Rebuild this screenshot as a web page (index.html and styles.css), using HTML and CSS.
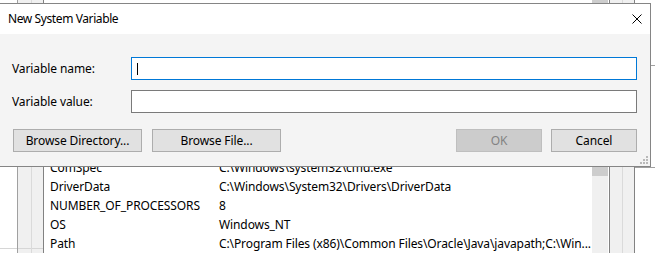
FILE: index.html
```html
<!DOCTYPE html>
<html lang="en">
<head>
    <meta charset="UTF-8">
    <title>New System Variable</title>
    <link rel="stylesheet" href="styles.css">
</head>
<body>
    <div class="backdrop">
        <div class="edge-l"><div class="foot"></div></div>
        <div class="rail rail-a"><div class="foot"></div></div>
        <div class="rail rail-b"><div class="foot"></div></div>
        <div class="list">
            <div class="list-body">
                <div class="rows">
                    <div class="row"><span>ComSpec</span><span>C:\Windows\system32\cmd.exe</span></div>
                    <div class="row"><span>DriverData</span><span>C:\Windows\System32\Drivers\DriverData</span></div>
                    <div class="row"><span>NUMBER_OF_PROCESSORS</span><span>8</span></div>
                    <div class="row"><span>OS</span><span>Windows_NT</span></div>
                    <div class="row"><span>Path</span><span>C:\Program Files (x86)\Common Files\Oracle\Java\javapath;C:\Win...</span></div>
                </div>
                <div class="vscroll"><div class="thumb"></div></div>
            </div>
            <div class="hscroll"></div>
        </div>
        <div class="rail rail-c"></div>
        <div class="rail rail-d"></div>
        <div class="edge-r">
            <div class="tick tick-a"></div>
            <div class="tick tick-b"></div>
        </div>
    </div>

    <div class="dialog">
        <div class="titlebar">
            <span class="title">New System Variable</span>
            <svg class="close" width="10" height="10" viewBox="0 0 10 10">
                <path d="M0.5 0.5 L9.5 9.5 M9.5 0.5 L0.5 9.5" stroke="#000" stroke-width="1" fill="none"/>
            </svg>
        </div>
        <div class="dialog-body">
            <div class="form-grid">
                <label class="field-label">Variable name:</label>
                <div class="field field-focus"><span class="caret"></span></div>
                <label class="field-label">Variable value:</label>
                <div class="field"></div>
            </div>
            <div class="button-row">
                <div class="button-group">
                    <button class="btn btn-wide">Browse Directory...</button>
                    <button class="btn btn-wide">Browse File...</button>
                </div>
                <div class="button-group">
                    <button class="btn btn-disabled">OK</button>
                    <button class="btn">Cancel</button>
                </div>
            </div>
            <svg class="grip" width="8" height="8" viewBox="0 0 8 8">
                <rect x="6" y="0" width="2" height="2" fill="#b9b9b9"/>
                <rect x="3" y="3" width="2" height="2" fill="#b9b9b9"/>
                <rect x="6" y="3" width="2" height="2" fill="#b9b9b9"/>
                <rect x="0" y="6" width="2" height="2" fill="#b9b9b9"/>
                <rect x="3" y="6" width="2" height="2" fill="#b9b9b9"/>
                <rect x="6" y="6" width="2" height="2" fill="#b9b9b9"/>
            </svg>
        </div>
    </div>
</body>
</html>
```

FILE: styles.css
```css
html, body {
    margin: 0;
    padding: 0;
}
body {
    width: 655px;
    height: 253px;
    overflow: hidden;
    position: relative;
    background: #fff;
    font-family: 'Noto Sans', 'Liberation Sans', sans-serif;
    font-size: 12px;
    letter-spacing: -0.1px;
    color: #000;
}

/* window behind the dialog */
.backdrop {
    display: flex;
    height: 253px;
}
.edge-l {
    width: 17px;
    display: flex;
    flex-direction: column;
}
.rail {
    box-sizing: border-box;
    background: #f0f0f0;
    display: flex;
    flex-direction: column;
}
.rail-a {
    width: 14px;
    border-left: 1px solid #a0a0a0;
}
.rail-b {
    width: 12px;
    border-left: 1px solid #dadada;
}
.rail-c {
    width: 13px;
    border-left: 1px solid #828282;
}
.rail-d {
    width: 12px;
    border-left: 1px solid #dadada;
}
.foot {
    margin-top: auto;
    height: 4px;
    border-top: 1px solid #d6d6d6;
}
.list {
    width: 566px;
    box-sizing: border-box;
    border-left: 1px solid #828282;
    display: flex;
    flex-direction: column;
}
.list-body {
    flex: 1;
    display: flex;
}
.rows {
    flex: 1;
    padding-top: 158px;
}
.row {
    display: grid;
    grid-template-columns: 169px 1fr;
    height: 19px;
    line-height: 19px;
    padding-left: 6px;
    white-space: nowrap;
}
.vscroll {
    width: 16px;
    margin-right: 1px;
    background: #f0f0f0;
}
.thumb {
    height: 176px;
    background: #cdcdcd;
}
.hscroll {
    width: 365px;
    height: 4px;
    border-top: 1px solid #d6d6d6;
}
.edge-r {
    flex: 1;
    box-sizing: border-box;
    border-left: 1px solid #828282;
    display: flex;
    flex-direction: column;
}
.tick {
    height: 1px;
    background: #a0a0a0;
}
.tick-a {
    margin-top: 65px;
}
.tick-b {
    margin-top: 101px;
}

/* the dialog */
.dialog {
    position: absolute;
    top: 3px;
    left: 0;
    width: 651px;
    height: 164px;
    box-sizing: border-box;
    border: 1px solid #858585;
    border-left: none;
    display: flex;
    flex-direction: column;
    background: #f4f4f4;
}
.titlebar {
    height: 30px;
    background: #fff;
    display: flex;
    align-items: center;
    justify-content: space-between;
    padding: 0 8px;
}
.title {
    line-height: 16px;
    letter-spacing: -0.4px;
}
.dialog-body {
    flex: 1;
    position: relative;
    padding: 23px 13px 0 12px;
}
.form-grid {
    display: grid;
    grid-template-columns: 119px 1fr;
    row-gap: 10px;
    align-items: center;
}
.field {
    box-sizing: border-box;
    height: 23px;
    border: 1px solid #7a7a7a;
    background: #fff;
    display: flex;
    align-items: center;
    padding-left: 5px;
}
.field-focus {
    border-color: #0078d7;
}
.caret {
    width: 1px;
    height: 12px;
    background: #000;
}
.button-row {
    display: flex;
    justify-content: space-between;
    margin-top: 16px;
    padding-left: 1px;
}
.button-group {
    display: flex;
    gap: 10px;
}
.button-group + .button-group {
    gap: 9px;
}
.btn {
    box-sizing: border-box;
    width: 86px;
    height: 23px;
    padding: 0;
    background: #e1e1e1;
    border: 1px solid #adadad;
    font-family: inherit;
    font-size: 12px;
    letter-spacing: -0.1px;
    color: #000;
}
.btn-wide {
    width: 129px;
}
.btn-disabled {
    background: #cccccc;
    border-color: #bfbfbf;
    color: #838383;
}
.grip {
    position: absolute;
    right: 2px;
    bottom: 2px;
}
```
